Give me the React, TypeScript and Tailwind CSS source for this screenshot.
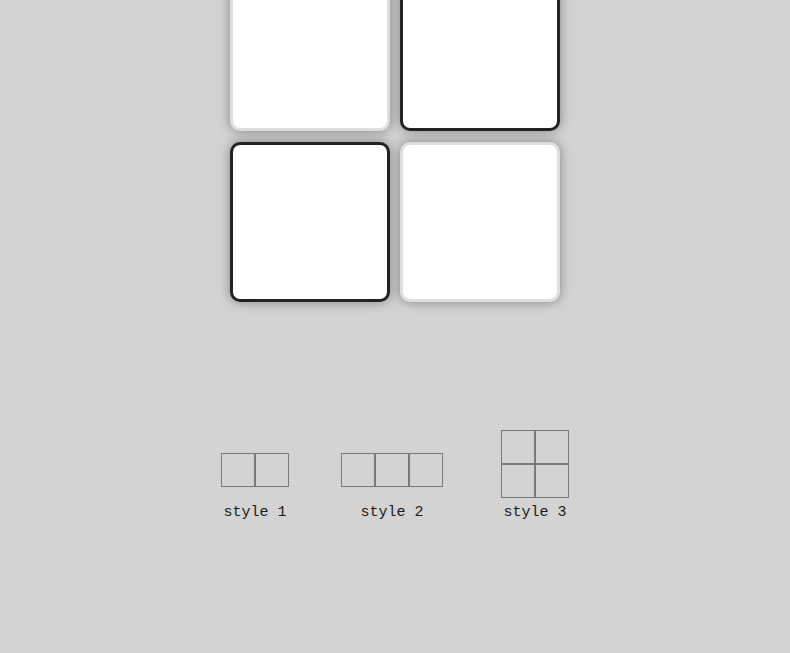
import React from 'react';

type Tile = { dark: boolean };

const tiles: Tile[] = [{ dark: false }, { dark: true }, { dark: true }, { dark: false }];

function Cell() {
  return <div className="h-[34px] w-[34px] border border-[#7a7a7a]" />;
}

function LayoutOption({ label, cols, rows, gapBelow }: { label: string; cols: number; rows: number; gapBelow: string }) {
  return (
    <div className="flex flex-col items-center">
      <div className={`flex flex-col ${gapBelow}`}>
        {Array.from({ length: rows }).map((_, r) => (
          <div key={r} className="flex">
            {Array.from({ length: cols }).map((_, c) => (
              <Cell key={c} />
            ))}
          </div>
        ))}
      </div>
      <span className="text-[15px] leading-[18px] text-[#1a1a1a] [font-family:'Liberation_Mono',monospace]">{label}</span>
    </div>
  );
}

export default function App() {
  return (
    <div className="h-[653px] w-full overflow-hidden bg-[#d3d3d3]">
      <div className="-mt-[29px] flex justify-center">
        <div className="grid grid-cols-[160px_160px] gap-x-[10px] gap-y-[11px]">
          {tiles.map((t, i) => (
            <div
              key={i}
              className={
                'h-[160px] w-[160px] rounded-[10px] border-[3px] bg-white shadow-[0_0_12px_rgba(0,0,0,0.38)] ' +
                (t.dark ? 'border-[#222222]' : 'border-[#dedede]')
              }
            />
          ))}
        </div>
      </div>

      <div className="mt-[128px] flex items-end justify-center">
        <LayoutOption label="style 1" cols={2} rows={1} gapBelow="mb-[17px]" />
        <div className="ml-[52px] mr-[58px]">
          <LayoutOption label="style 2" cols={3} rows={1} gapBelow="mb-[17px]" />
        </div>
        <LayoutOption label="style 3" cols={2} rows={2} gapBelow="mb-[6px]" />
      </div>
    </div>
  );
}
